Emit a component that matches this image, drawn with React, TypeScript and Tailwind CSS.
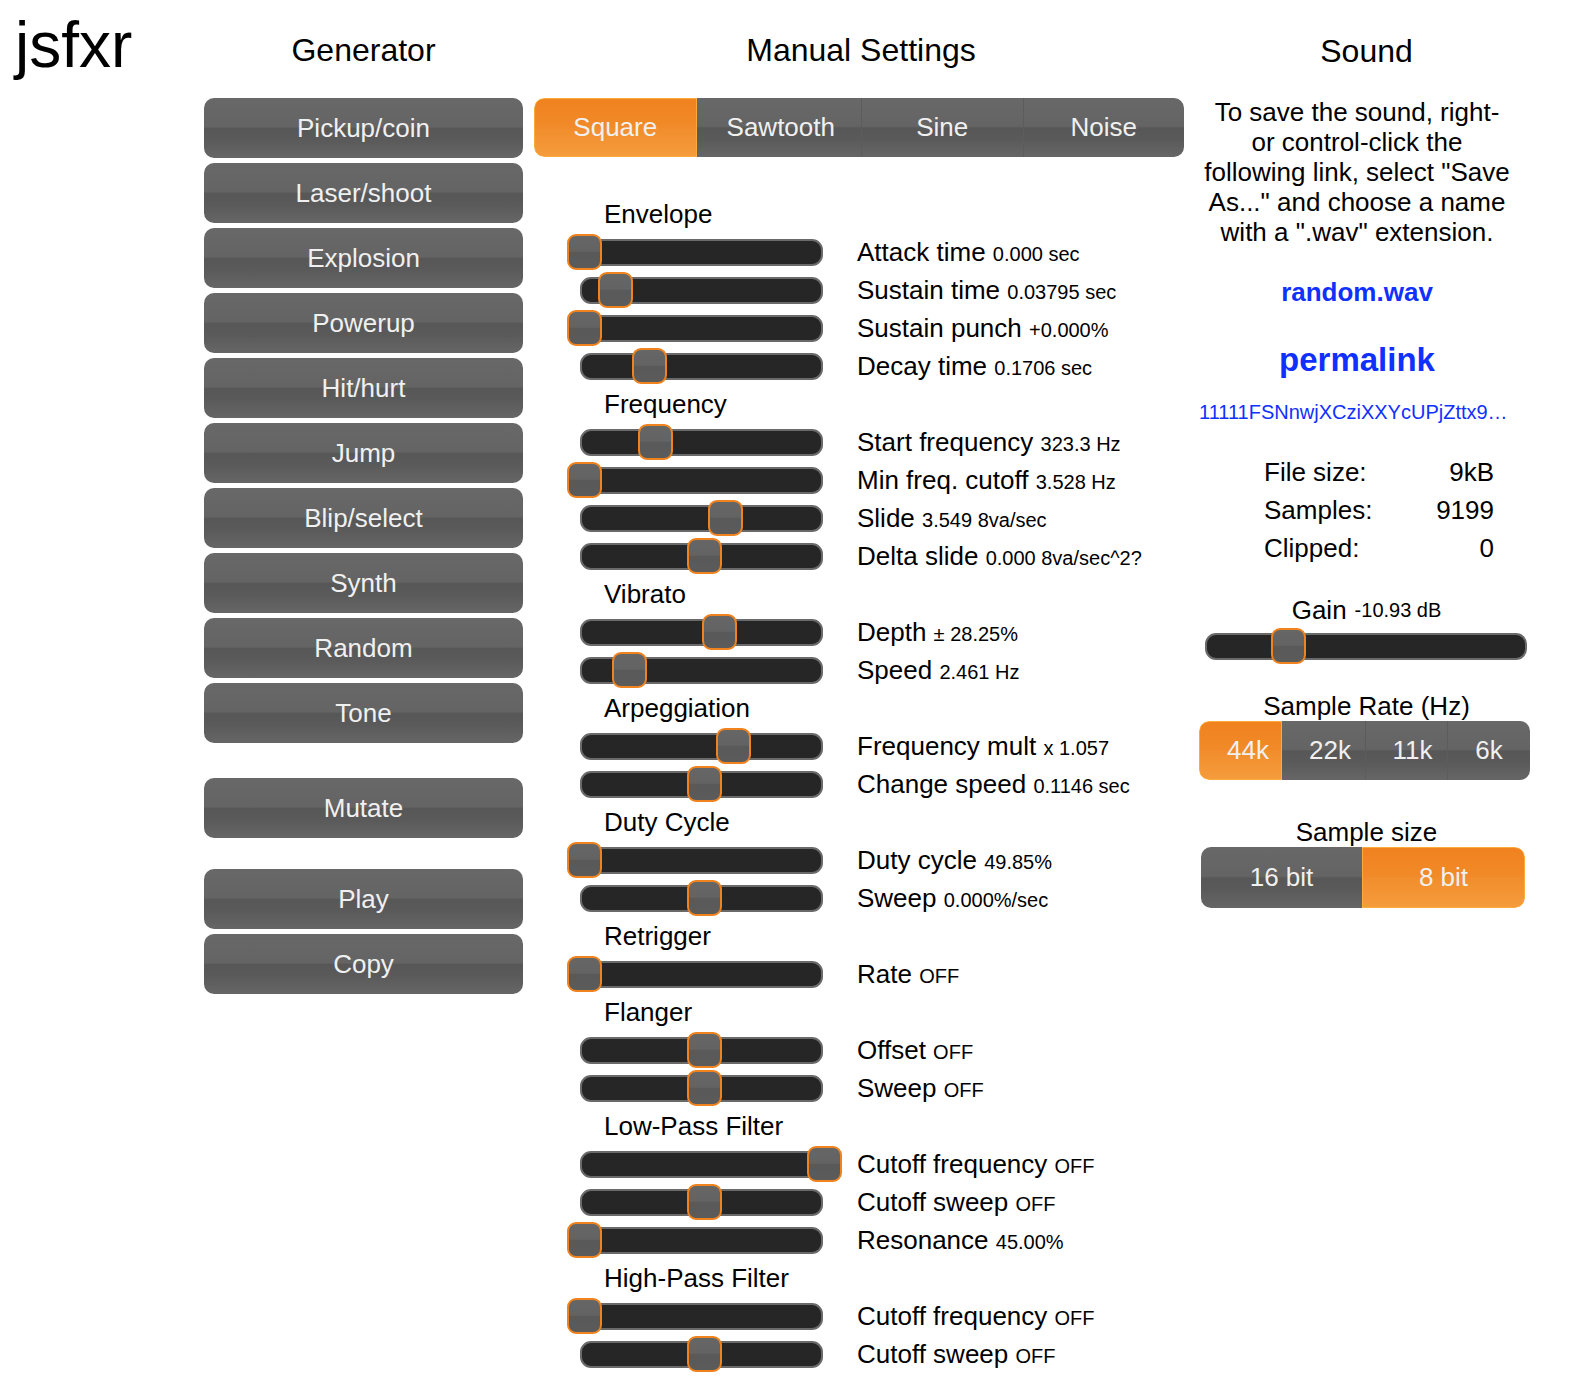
import React from "react";

type Row = [string, string, number];
type Group = { title: string; rows: Row[] };

const groups: Group[] = [
  {
    title: "Envelope",
    rows: [
      ["Attack time", "0.000 sec", 0],
      ["Sustain time", "0.03795 sec", 0.13],
      ["Sustain punch", "+0.000%", 0],
      ["Decay time", "0.1706 sec", 0.27],
    ],
  },
  {
    title: "Frequency",
    rows: [
      ["Start frequency", "323.3 Hz", 0.296],
      ["Min freq. cutoff", "3.528 Hz", 0],
      ["Slide", "3.549 8va/sec", 0.5875],
      ["Delta slide", "0.000 8va/sec^2?", 0.5],
    ],
  },
  {
    title: "Vibrato",
    rows: [
      ["Depth", "± 28.25%", 0.5625],
      ["Speed", "2.461 Hz", 0.1875],
    ],
  },
  {
    title: "Arpeggiation",
    rows: [
      ["Frequency mult", "x 1.057", 0.62],
      ["Change speed", "0.1146 sec", 0.5],
    ],
  },
  {
    title: "Duty Cycle",
    rows: [
      ["Duty cycle", "49.85%", 0],
      ["Sweep", "0.000%/sec", 0.5],
    ],
  },
  { title: "Retrigger", rows: [["Rate", "OFF", 0]] },
  {
    title: "Flanger",
    rows: [
      ["Offset", "OFF", 0.5],
      ["Sweep", "OFF", 0.5],
    ],
  },
  {
    title: "Low-Pass Filter",
    rows: [
      ["Cutoff frequency", "OFF", 1],
      ["Cutoff sweep", "OFF", 0.5],
      ["Resonance", "45.00%", 0],
    ],
  },
  {
    title: "High-Pass Filter",
    rows: [
      ["Cutoff frequency", "OFF", 0],
      ["Cutoff sweep", "OFF", 0.5],
    ],
  },
];

const gray =
  "bg-[linear-gradient(to_bottom,#686868_0%,#646464_48%,#575757_51%,#5a5a5a_70%,#666666_100%)]";
const orange =
  "bg-[linear-gradient(to_bottom,#f0821f_0%,#f18a28_48%,#f18d2c_51%,#f59c3c_100%)]";

function Slider({ v, width }: { v: number; width: number }) {
  return (
    <div
      className="relative h-[27px] rounded-[11px] border-2 border-[#6a6a6a] bg-[#262626]"
      style={{ width }}
    >
      <div
        className="absolute top-[-7px] w-[35px] h-[36px] rounded-[9px] border-2 border-[#f0831d] bg-[linear-gradient(to_bottom,#666666_0%,#636363_47%,#595959_52%,#5b5b5b_100%)]"
        style={{ left: -15 + v * (width - 3) }}
      />
    </div>
  );
}

function GenButton({ label, className = "" }: { label: string; className?: string }) {
  return (
    <div
      className={`h-[60px] rounded-[10px] flex items-center justify-center text-[26px] text-[#f0f0f0] ${gray} ${className}`}
    >
      {label}
    </div>
  );
}

export default function App() {
  const gens = [
    "Pickup/coin",
    "Laser/shoot",
    "Explosion",
    "Powerup",
    "Hit/hurt",
    "Jump",
    "Blip/select",
    "Synth",
    "Random",
    "Tone",
  ];
  return (
    <div className="w-[1570px] min-h-[1396px] bg-white text-black font-['Liberation_Sans',Arial,sans-serif] flex">
      {/* title */}
      <div className="w-[204px] shrink-0">
        <div className="text-[64px] leading-none mt-[13px] ml-[15px]">jsfxr</div>
      </div>

      {/* Generator */}
      <div className="w-[319px] shrink-0">
        <div className="h-[98px] flex items-center justify-center text-[32px] pt-[2px]">Generator</div>
        <div className="flex flex-col gap-[5px]">
          {gens.map((g) => (
            <GenButton key={g} label={g} />
          ))}
        </div>
        <GenButton label="Mutate" className="mt-[35px]" />
        <GenButton label="Play" className="mt-[31px]" />
        <GenButton label="Copy" className="mt-[5px]" />
      </div>

      <div className="w-[11px] shrink-0" />

      {/* Manual Settings */}
      <div className="w-[650px] shrink-0">
        <div className="h-[98px] flex items-center justify-center text-[32px] pt-[2px] pl-[4px]">
          Manual Settings
        </div>
        <div className="flex h-[59px] rounded-[10px] overflow-hidden text-[26px] text-[#f0f0f0]">
          <div
            className={`flex-1 flex items-center justify-center rounded-l-[10px] border border-[#fbab3a] ${orange}`}
          >
            Square
          </div>
          <div className={`flex-1 flex items-center justify-center pl-[4px] ${gray}`}>Sawtooth</div>
          <div className={`flex-1 flex items-center justify-center border-l border-[#5c5c5c] ${gray}`}>
            Sine
          </div>
          <div className={`flex-1 flex items-center justify-center border-l border-[#5c5c5c] ${gray}`}>
            Noise
          </div>
        </div>
        <div className="mt-[38px]">
          {groups.map((g) => (
            <div key={g.title}>
              <div className="h-[38px] flex items-center pl-[70px] text-[26px]">{g.title}</div>
              {g.rows.map(([label, val, v], i) => (
                <div key={g.title + i} className="h-[38px] flex items-center">
                  <div className="w-[323px] shrink-0 pl-[46px]">
                    <Slider v={v} width={243} />
                  </div>
                  <div className="whitespace-nowrap">
                    <span className="text-[26px]">{label + " "}</span>
                    <span className="text-[20px]">{val}</span>
                  </div>
                </div>
              ))}
            </div>
          ))}
        </div>
      </div>

      <div className="w-[15px] shrink-0" />

      {/* Sound */}
      <div className="w-[331px] shrink-0">
        <div className="h-[97px] flex items-center justify-center text-[32px] pt-[4px] pl-[4px]">Sound</div>
        <div className="w-[316px] text-center text-[26px] leading-[30px]">
          To save the sound, right-
          <br />
          or control-click the
          <br />
          following link, select "Save
          <br />
          As..." and choose a name
          <br />
          with a ".wav" extension.
        </div>
        <div className="w-[316px] mt-[30px] text-center text-[26px] leading-[30px] font-bold text-[#1030ff]">
          random.wav
        </div>
        <div className="w-[316px] mt-[34px] text-center text-[33px] leading-[38px] font-bold text-[#1030ff]">
          permalink
        </div>
        <div className="w-[316px] mt-[22px] text-[20px] leading-[22px] text-[#1030ff] whitespace-nowrap">
          11111FSNnwjXCziXXYcUPjZttx9…
        </div>
        <div className="mt-[30px] ml-[65px] w-[230px] text-[26px]">
          <div className="h-[38px] flex items-center justify-between">
            <span>File size:</span>
            <span>9kB</span>
          </div>
          <div className="h-[38px] flex items-center justify-between">
            <span>Samples:</span>
            <span>9199</span>
          </div>
          <div className="h-[38px] flex items-center justify-between">
            <span>Clipped:</span>
            <span>0</span>
          </div>
        </div>
        <div className="mt-[28px] h-[30px] flex items-center justify-center whitespace-nowrap pl-[4px]">
          <span className="text-[26px]">Gain</span>
          <span className="text-[20px] ml-[8px]">-10.93 dB</span>
        </div>
        <div className="mt-[8px] ml-[6px]">
          <Slider v={0.2476} width={322} />
        </div>
        <div className="mt-[31px] h-[30px] flex items-center justify-center text-[26px] pl-[4px]">
          Sample Rate (Hz)
        </div>
        <div className="flex w-[331px] h-[59px] rounded-[10px] overflow-hidden text-[26px] text-[#f0f0f0]">
          <div
            className={`w-[83px] shrink-0 flex items-center justify-center pl-[15px] rounded-l-[10px] border border-[#fbab3a] ${orange}`}
          >
            44k
          </div>
          <div className={`w-[83px] shrink-0 flex items-center justify-center pl-[13px] ${gray}`}>22k</div>
          <div
            className={`w-[82px] shrink-0 flex items-center justify-center pl-[12px] border-l border-[#5c5c5c] ${gray}`}
          >
            11k
          </div>
          <div
            className={`w-[83px] shrink-0 flex items-center justify-center border-l border-[#5c5c5c] ${gray}`}
          >
            6k
          </div>
        </div>
        <div className="mt-[37px] h-[30px] flex items-center justify-center text-[26px] pl-[4px]">
          Sample size
        </div>
        <div className="ml-[2px] w-[324px] flex h-[61px] rounded-[10px] overflow-hidden text-[26px] text-[#f0f0f0]">
          <div className={`flex-1 flex items-center justify-center ${gray}`}>16 bit</div>
          <div
            className={`flex-1 flex items-center justify-center rounded-r-[10px] border border-[#fbab3a] ${orange}`}
          >
            8 bit
          </div>
        </div>
      </div>
    </div>
  );
}
